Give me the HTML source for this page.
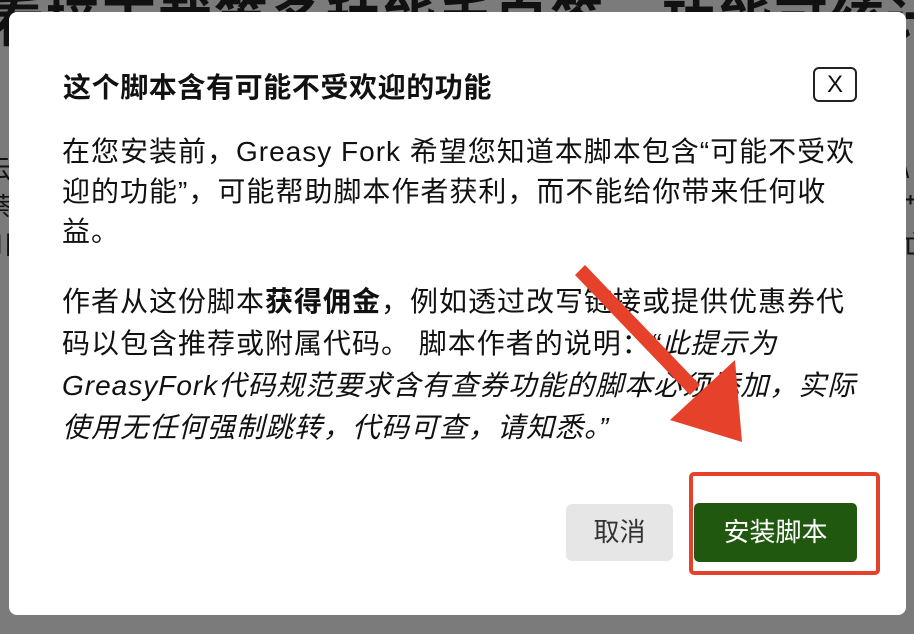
<!DOCTYPE html>
<html><head><meta charset="utf-8"><style>
html,body{margin:0;padding:0;width:914px;height:634px;overflow:hidden;background:#7b7b7b;font-family:"Liberation Sans","Noto Sans CJK SC",sans-serif}
.bgt{position:absolute;left:-10px;top:-22px;font-size:54px;font-weight:bold;color:#111;white-space:nowrap;letter-spacing:2px}
.side{position:absolute;font-size:26px;color:#111;}
.dlg{position:absolute;left:9px;top:12px;width:897px;height:603px;background:#fff;border-radius:8px}
.t{position:absolute;left:62px;white-space:nowrap;font-size:28px;letter-spacing:1px;color:#111;line-height:38px}
.title{position:absolute;left:63px;top:66px;font-size:28px;letter-spacing:0.6px;font-weight:bold;color:#111;white-space:nowrap}
.x{position:absolute;left:813px;top:67px;width:44px;height:35px;border:2px solid #222;border-radius:6px;box-sizing:border-box;text-align:center;font-size:24px;line-height:31px;color:#111}
.cancel{position:absolute;left:566px;top:504px;width:107px;height:57px;background:#e6e6e6;border-radius:6px;font-size:26px;text-align:center;line-height:57px;color:#333}
.ok{position:absolute;left:694px;top:503px;width:163px;height:59px;background:#21580f;border-radius:5px;font-size:26px;text-align:center;line-height:59px;color:#fff}
.red{position:absolute;left:689px;top:472px;width:191px;height:103px;border:4px solid #e5412b;border-radius:5px;box-sizing:border-box}
</style></head><body>
<div class="bgt">看接下载等多种能手自签，功能可统计</div>
<div class="side" style="left:-14px;top:150px;line-height:38px">云<br>萘<br>川</div>
<div class="side" style="left:902px;top:150px;line-height:38px">\<br>艹<br>亡</div>
<div class="dlg"></div>
<div class="title">这个脚本含有可能不受欢迎的功能</div>
<div class="x">X</div>
<div class="t" style="top:133px">在您安装前，Greasy Fork 希望您知道本脚本包含“可能不受欢</div>
<div class="t" style="top:173px">迎的功能”，可能帮助脚本作者获利，而不能给你带来任何收</div>
<div class="t" style="top:213px">益。</div>
<div class="t" style="top:283px">作者从这份脚本<b>获得佣金</b>，例如透过改写链接或提供优惠券代</div>
<div class="t" style="top:325px">码以包含推荐或附属代码。 脚本作者的说明：<i>“此提示为</i></div>
<div class="t" style="top:367px"><i>GreasyFork代码规范要求含有查券功能的脚本必须添加，实际</i></div>
<div class="t" style="top:409px"><i>使用无任何强制跳转，代码可查，请知悉。”</i></div>
<div class="cancel">取消</div>
<div class="ok">安装脚本</div>
<div class="red"></div>
<svg style="position:absolute;left:0;top:0" width="914" height="634">
<polygon points="575,275 585,265 700,385 690,395" fill="#e5412b"/>
<polygon points="670,420 735,360 742,442" fill="#e5412b"/>
</svg>
</body></html>
